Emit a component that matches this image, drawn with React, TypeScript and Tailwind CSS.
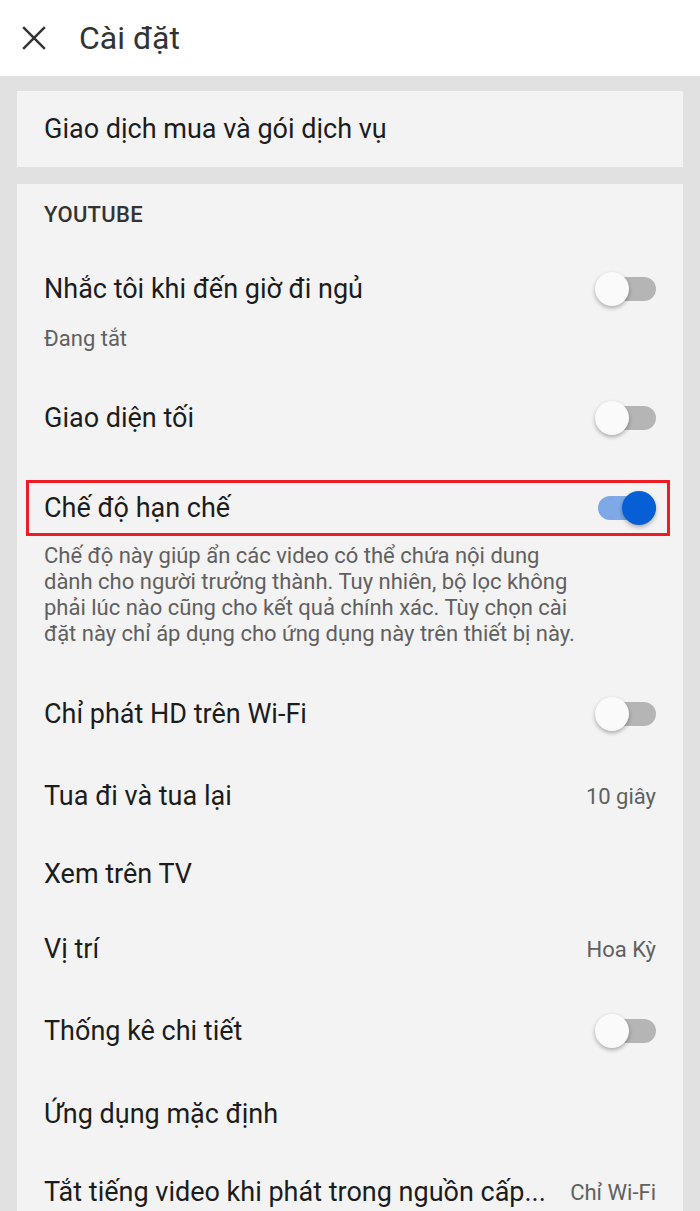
import React from "react";

const Toggle = ({ on = false }: { on?: boolean }) => {
  return (
    <div className="relative w-[61px] h-[34px] shrink-0">
      <div
        className={`absolute left-[3px] right-0 top-[5px] h-[24px] rounded-full ${
          on ? "bg-[#7ea8e6]" : "bg-[#b5b5b5]"
        }`}
      />
      <div
        className={`absolute top-0 w-[34px] h-[34px] rounded-full shadow-[0_2px_4px_rgba(0,0,0,0.3)] ${
          on ? "right-0 bg-[#065fd4]" : "left-0 bg-[#fafafa]"
        }`}
      />
    </div>
  );
};

const Row = ({
  title,
  h,
  right,
}: {
  title: string;
  h: string;
  right?: React.ReactNode;
}) => {
  return (
    <div className={`flex items-center justify-between pl-[27px] pr-[27px] ${h}`}>
      <span className="text-[27px] text-[#1c1c1c] whitespace-nowrap">{title}</span>
      {right}
    </div>
  );
};

const Value = ({ text }: { text: string }) => (
  <span className="text-[22px] text-[#606060] whitespace-nowrap">{text}</span>
);

const Settings = () => {
  return (
    <div
      className="w-[700px] h-[1211px] overflow-hidden bg-[#e1e1e1] flex flex-col"
      style={{ fontFamily: "Roboto, 'Noto Sans', sans-serif" }}
    >
      {/* header */}
      <div className="h-[76px] bg-white flex items-center shrink-0">
        <svg
          width="26"
          height="26"
          viewBox="0 0 24 24"
          className="ml-[21px]"
          stroke="#333333"
          strokeWidth="2.3"
          fill="none"
        >
          <path d="M2 2 L22 22 M22 2 L2 22" />
        </svg>
        <h1 className="ml-[32px] text-[32px] text-[#333333]">Cài đặt</h1>
      </div>

      <div className="px-[17px] pt-[15px] flex flex-col">
        <div className="h-[76px] bg-[#f3f3f3] flex items-center pl-[27px]">
          <span className="text-[27px] text-[#1c1c1c]">Giao dịch mua và gói dịch vụ</span>
        </div>

        <div className="mt-[17px] bg-[#f3f3f3] flex flex-col">
          <div className="h-[60px] flex items-center pl-[27px]">
            <span className="text-[22px] font-medium text-[#333333] tracking-[0.3px]">YOUTUBE</span>
          </div>

          <div className="pt-[20px] pb-[16px]">
            <Row title="Nhắc tôi khi đến giờ đi ngủ" h="h-[50px]" right={<Toggle />} />
            <div className="h-[48px] flex items-center pl-[27px]">
              <span className="text-[22px] text-[#606060]">Đang tắt</span>
            </div>
          </div>

          <Row title="Giao diện tối" h="h-[80px]" right={<Toggle />} />

          <div className="mt-[22px] ml-[9px] mr-[13px] h-[56px] border-[3px] border-[#ee1c25] flex items-center justify-between pl-[15px] pr-[11px]">
            <span className="text-[27px] text-[#1c1c1c]">Chế độ hạn chế</span>
            <Toggle on />
          </div>

          <p className="mt-[7px] pl-[27px] pr-[10px] text-[22px] leading-[26px] text-[#606060] whitespace-nowrap">
            Chế độ này giúp ẩn các video có thể chứa nội dung
            <br />
            dành cho người trưởng thành. Tuy nhiên, bộ lọc không
            <br />
            phải lúc nào cũng cho kết quả chính xác. Tùy chọn cài
            <br />
            đặt này chỉ áp dụng cho ứng dụng này trên thiết bị này.
          </p>

          <div className="mt-[27px]">
            <Row title="Chỉ phát HD trên Wi-Fi" h="h-[80px]" right={<Toggle />} />
            <Row title="Tua đi và tua lại" h="h-[84px]" right={<Value text="10 giây" />} />
            <Row title="Xem trên TV" h="h-[72px]" />
            <Row title="Vị trí" h="h-[78px]" right={<Value text="Hoa Kỳ" />} />
            <Row title="Thống kê chi tiết" h="h-[86px]" right={<Toggle />} />
            <Row title="Ứng dụng mặc định" h="h-[80px]" />
            <Row
              title="Tắt tiếng video khi phát trong nguồn cấp..."
              h="h-[76px]"
              right={<Value text="Chỉ Wi-Fi" />}
            />
          </div>
        </div>
      </div>
    </div>
  );
};

export default Settings;
